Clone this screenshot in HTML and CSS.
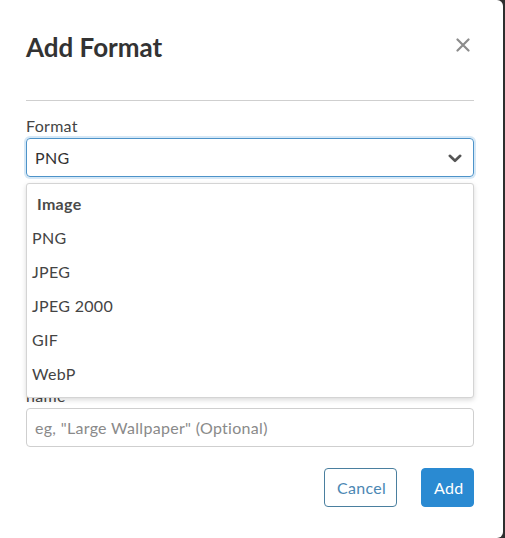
FILE: index.html
```html
<!DOCTYPE html>
<html lang="en">
<head>
    <meta charset="UTF-8">
    <meta name="viewport" content="width=device-width, initial-scale=1.0">
    <title>Add Format</title>
    <link rel="stylesheet" href="styles.css">
</head>
<body>
    <div class="modal">
        <div class="modal-header">
            <h1>Add Format</h1>
            <button class="close" aria-label="Close">
                <svg width="14" height="14" viewBox="0 0 14 14">
                    <path d="M1.5 1.5 L12.5 12.5 M12.5 1.5 L1.5 12.5" stroke="#8c8c8c" stroke-width="2.2" stroke-linecap="round"/>
                </svg>
            </button>
        </div>
        <hr class="divider">

        <div class="form-group">
            <label>Format</label>
            <div class="select-wrap">
                <div class="select">
                    <span>PNG</span>
                    <svg class="chevron" width="14" height="9" viewBox="0 0 14 9">
                        <path d="M1.8 1.8 L7 6.8 L12.2 1.8" fill="none" stroke="#555" stroke-width="2.6" stroke-linecap="round" stroke-linejoin="round"/>
                    </svg>
                </div>
                <ul class="menu">
                    <li class="menu-header">Image</li>
                    <li>PNG</li>
                    <li>JPEG</li>
                    <li>JPEG 2000</li>
                    <li>GIF</li>
                    <li>WebP</li>
                </ul>
            </div>
        </div>

        <!-- room for the fields that the open menu hides -->
        <div class="form-group covered"></div>

        <div class="form-group">
            <label>name</label>
            <div class="input placeholder">eg, "Large Wallpaper" (Optional)</div>
        </div>

        <div class="modal-footer">
            <button class="btn btn-outline">Cancel</button>
            <button class="btn btn-primary">Add</button>
        </div>
    </div>
</body>
</html>
```

FILE: styles.css
```css
* {
    box-sizing: border-box;
}
body {
    margin: 0;
    background-color: #2e2e2e;
    font-family: Lato, "Open Sans", sans-serif;
    font-size: 16px;
    letter-spacing: 0.3px;
    color: #444;
}
.modal {
    width: 503px;
    height: 538px;
    background-color: #fff;
    border-radius: 0 6px 6px 0;
    padding: 32px 29px 0 26px;
}
.modal-header {
    display: flex;
    justify-content: space-between;
    align-items: center;
    height: 30px;
}
.modal-header h1 {
    margin: 0;
    font-size: 26px;
    line-height: 30px;
    font-weight: 700;
    letter-spacing: 0;
    color: #333;
}
.close {
    border: none;
    background: none;
    padding: 0;
    margin: -4px 4px 0 0;
    width: 14px;
    height: 14px;
    display: flex;
}
.divider {
    border: none;
    border-top: 1px solid #cfcfcf;
    margin: 38px 0 16px;
}
.form-group {
    margin-bottom: 15px;
}
.form-group label {
    display: block;
    line-height: 18px;
    margin-bottom: 3px;
    color: #444;
}
.select-wrap {
    position: relative;
}
.select {
    display: flex;
    align-items: center;
    justify-content: space-between;
    height: 39px;
    padding: 0 11px 0 8px;
    border: 1px solid #4d93c9;
    border-radius: 4px;
    box-shadow: 0 0 0 2px #d6e8f6;
    color: #333;
}
.chevron {
    margin-top: 1px;
}
.menu {
    position: absolute;
    top: 45px;
    left: 0;
    right: 0;
    margin: 0;
    padding: 3px 0 6px;
    list-style: none;
    background-color: #fff;
    border: 1px solid #d4d4d4;
    border-radius: 3px;
    box-shadow: 0 2px 5px rgba(0, 0, 0, 0.15);
    z-index: 2;
}
.menu li {
    line-height: 34px;
    padding: 0 5px;
    color: #444;
}
.menu .menu-header {
    padding-left: 10px;
    font-weight: 700;
    color: #4a4a4a;
}
.covered {
    height: 180px;
}
.input {
    height: 39px;
    padding: 0 8px;
    border: 1px solid #cfcfcf;
    border-radius: 4px;
    display: flex;
    align-items: center;
}
.placeholder {
    color: #8a8a8a;
}
.modal-footer {
    display: flex;
    justify-content: flex-end;
    gap: 24px;
    margin-top: 21px;
}
.btn {
    height: 39px;
    padding: 0 12px;
    border-radius: 4px;
    font-family: inherit;
    font-size: 16px;
    letter-spacing: 0.3px;
}
.btn-outline {
    width: 73px;
    background-color: #fff;
    border: 1px solid #4a7f9f;
    color: #4b87b3;
}
.btn-primary {
    width: 53px;
    background-color: #2a8ad2;
    border: 1px solid #2a8ad2;
    color: #fff;
}
```
